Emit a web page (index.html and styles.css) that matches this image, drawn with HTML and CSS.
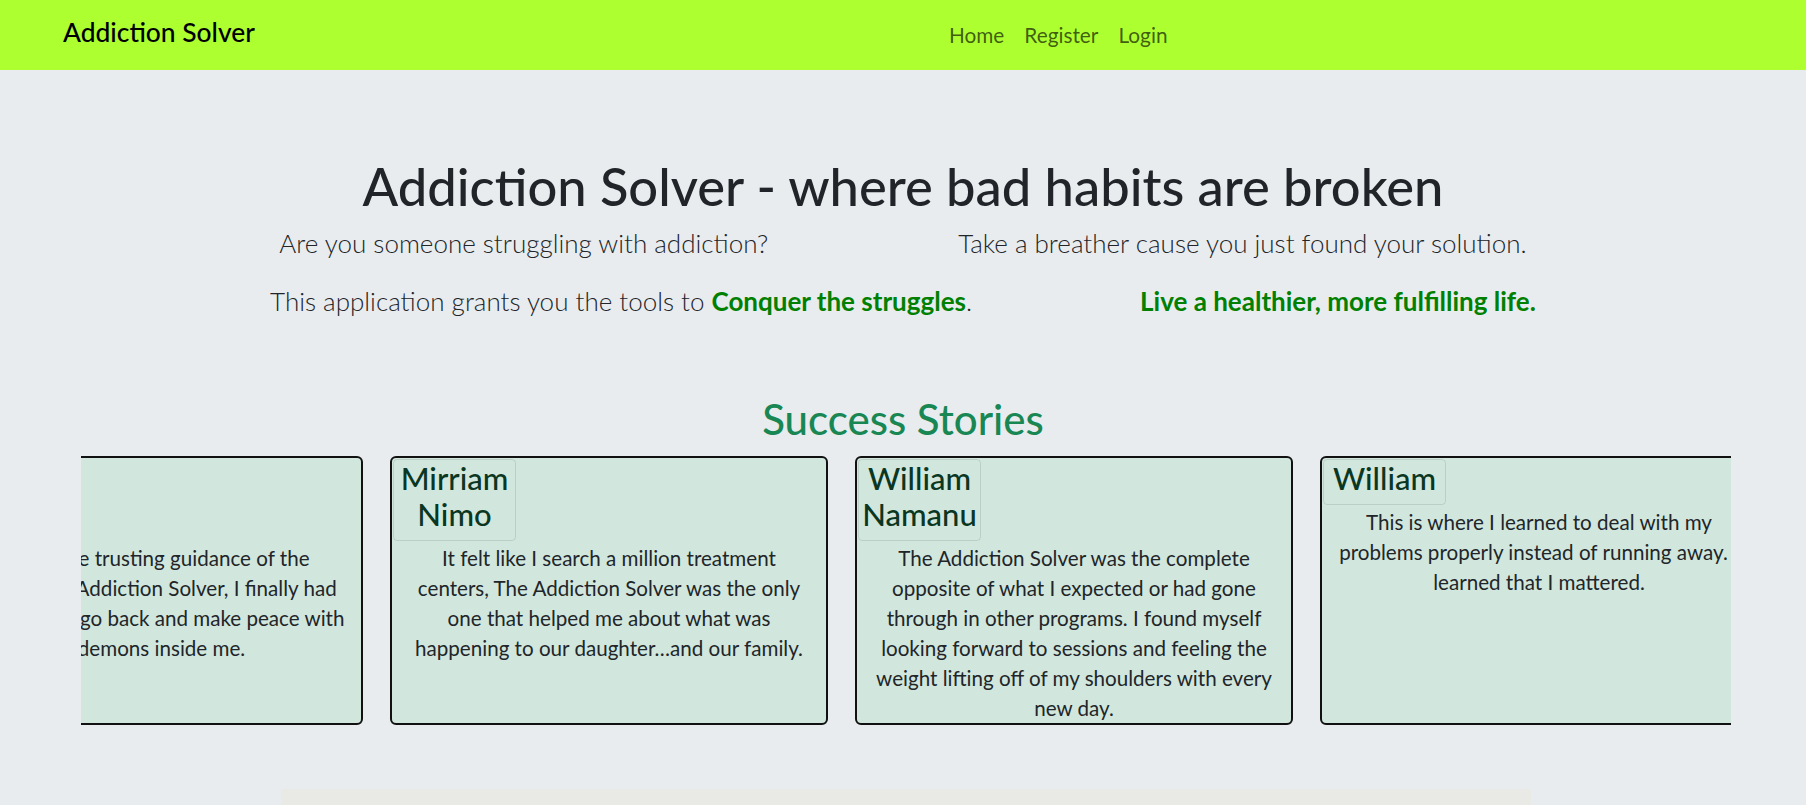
FILE: index.html
```html
<!DOCTYPE html>
<html lang="en">
<head>
<meta charset="utf-8">
<title>Addiction Solver</title>
<link rel="stylesheet" href="styles.css">
</head>
<body>
<nav class="navbar">
  <a class="brand" href="#">Addiction Solver</a>
  <ul class="nav-links">
    <li><a href="#">Home</a></li>
    <li><a href="#">Register</a></li>
    <li><a href="#">Login</a></li>
  </ul>
</nav>

<main>
  <section class="hero">
    <h1 class="hero-title">Addiction Solver - where bad habits are broken</h1>
    <div class="hero-row hero-row-1">
      <p>Are you someone struggling with addiction?</p>
      <p>Take a breather cause you just found your solution.</p>
    </div>
    <div class="hero-row hero-row-2">
      <p>This application grants you the tools to <strong class="hl">Conquer the struggles</strong>.</p>
      <p><strong class="hl">Live a healthier, more fulfilling life.</strong></p>
    </div>
  </section>

  <section class="stories">
    <h2 class="stories-title">Success Stories</h2>
    <div class="stories-viewport">
      <div class="stories-track">
        <article class="story-card">
          <h3 class="story-name">Jessica Adams</h3>
          <p class="story-text">Through the trusting guidance of the<br>counselors at Addiction Solver, I finally had<br>the courage to go back and make peace with<br>the demons inside me.</p>
        </article>
        <article class="story-card">
          <h3 class="story-name">Mirriam Nimo</h3>
          <p class="story-text">It felt like I search a million treatment centers, The Addiction Solver was the only one that helped me about what was happening to our daughter…and our family.</p>
        </article>
        <article class="story-card">
          <h3 class="story-name">William Namanu</h3>
          <p class="story-text">The Addiction Solver was the complete opposite of what I expected or had gone through in other programs. I found myself looking forward to sessions and feeling the weight lifting off of my shoulders with every new day.</p>
        </article>
        <article class="story-card">
          <h3 class="story-name">William</h3>
          <p class="story-text">This is where I learned to deal with my problems properly instead of running away. I learned that I mattered.</p>
        </article>
      </div>
    </div>
  </section>

  <div class="bottom-panel"></div>
</main>
</body>
</html>
```

FILE: styles.css
```css
html, body {
  margin: 0;
  padding: 0;
}

body {
  background: #e9ecef;
  font-family: Lato, "Noto Sans", "DejaVu Sans", sans-serif;
  color: #212529;
}

/* Navbar */
.navbar {
  height: 70px;
  background: #adff2f;
  display: flex;
  align-items: center;
  padding: 0 63px;
  box-sizing: border-box;
}

.brand {
  font-size: 26.4px;
  font-weight: 500;
  color: #000;
  text-decoration: none;
  margin-bottom: 6px;
}

.nav-links {
  display: flex;
  list-style: none;
  margin: 0 0 2px 684px;
  padding: 0;
}

.nav-links a {
  display: block;
  padding: 0 10px;
  font-size: 20.8px;
  color: rgba(0, 0, 0, 0.65);
  text-decoration: none;
}

/* Hero */
.hero {
  text-align: center;
  padding-top: 86px;
}

.hero-title {
  margin: 0;
  font-size: 52.5px;
  font-weight: 500;
  line-height: 60px;
  color: #212529;
}

.hero-row {
  display: flex;
  justify-content: center;
  font-size: 26px;
  font-weight: 300;
  line-height: 33px;
}

.hero-row p {
  margin: 0;
}

.hero-row-1 {
  margin-top: 11px;
  gap: 190px;
}

.hero-row-2 {
  margin-top: 25px;
  gap: 168px;
}

.hl {
  color: #008000;
  font-weight: 700;
}

/* Stories */
.stories-title {
  margin: 78px 0 14px;
  font-size: 42px;
  font-weight: 500;
  line-height: 46px;
  color: #198754;
  text-align: center;
}

.stories-viewport {
  margin-left: 81px;
  width: 1650px;
  overflow: hidden;
}

.stories-track {
  display: flex;
  gap: 27px;
  margin-left: -156px;
}

.story-card {
  flex: 0 0 438px;
  box-sizing: border-box;
  border: 2px solid #111;
  border-radius: 6px;
  background: #d1e7dd;
  display: flex;
  flex-direction: column;
  align-items: flex-start;
}

.story-name {
  width: 123px;
  box-sizing: border-box;
  margin: 1px;
  padding: 0 2px 8px;
  border: 1px solid rgba(0, 0, 0, 0.1);
  border-radius: 4px;
  font-size: 31px;
  font-weight: 500;
  line-height: 36px;
  color: #0a3622;
  text-align: center;
}

.story-text {
  align-self: stretch;
  margin: 1px 0 0;
  padding: 0 14px;
  font-size: 20.6px;
  line-height: 30px;
  text-align: center;
  color: #212529;
}

.bottom-panel {
  margin: 64px 0 0 281px;
  width: 1250px;
  height: 16px;
  background: #e9eae6;
}
```
